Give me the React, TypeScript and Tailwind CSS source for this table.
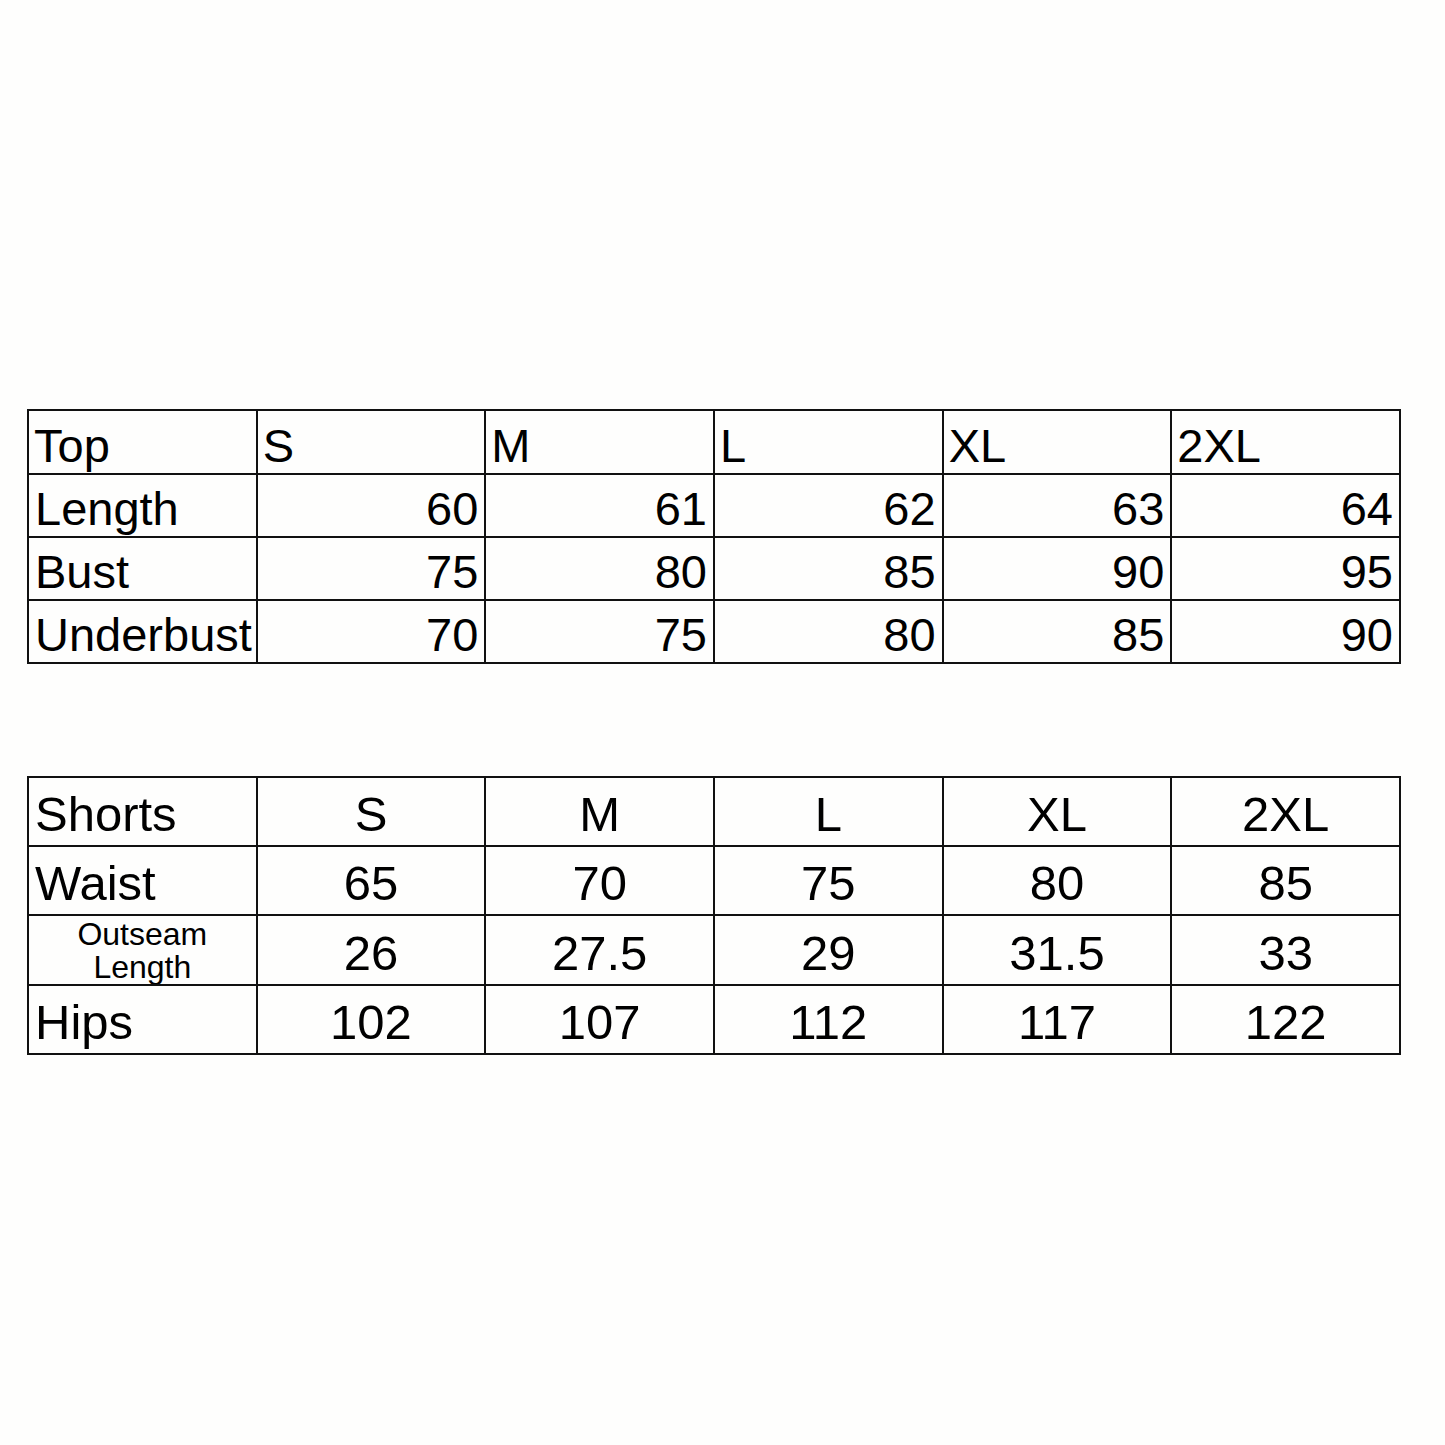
const topRows: [string, number[]][] = [
  ["Length", [60, 61, 62, 63, 64]],
  ["Bust", [75, 80, 85, 90, 95]],
  ["Underbust", [70, 75, 80, 85, 90]],
];

const shortsRows: [string, (number | string)[]][] = [
  ["Waist", [65, 70, 75, 80, 85]],
  ["Outseam Length", [26, "27.5", 29, "31.5", 33]],
  ["Hips", [102, 107, 112, 117, 122]],
];

const sizes = ["S", "M", "L", "XL", "2XL"];

const cell = "border-2 border-[#111] p-0 align-middle overflow-hidden whitespace-nowrap";

export default function App() {
  return (
    <div
      className="min-h-[1445px] w-[1445px] bg-[#fefefd] pl-[27px] pt-[409px] text-black"
      style={{ fontFamily: '"Liberation Sans", Arial, sans-serif' }}
    >
      <table className="w-[1374px] table-fixed border-collapse">
        <tbody>
          <tr className="h-[64px]">
            <td className={`${cell} pl-[5px] pt-[6px] text-[47px] leading-none`}>Top</td>
            {sizes.map((s) => (
              <td key={s} className={`${cell} pl-[5px] pt-[6px] text-[47px] leading-none`}>
                {s}
              </td>
            ))}
          </tr>
          {topRows.map(([label, vals]) => (
            <tr key={label} className="h-[63px]">
              <td className={`${cell} pl-[6px] pt-[6px] text-[47px] leading-none`}>{label}</td>
              {vals.map((v, i) => (
                <td key={i} className={`${cell} pr-[6px] pt-[6px] text-right text-[47px] leading-none`}>
                  {v}
                </td>
              ))}
            </tr>
          ))}
        </tbody>
      </table>

      <table className="mt-[112px] w-[1374px] table-fixed border-collapse">
        <tbody>
          <tr className="h-[69px]">
            <td className={`${cell} pl-[6px] pt-[6px] text-[49px] leading-none`}>Shorts</td>
            {sizes.map((s) => (
              <td key={s} className={`${cell} pt-[6px] text-center text-[49px] leading-none`}>
                {s}
              </td>
            ))}
          </tr>
          {shortsRows.map(([label, vals]) => (
            <tr key={label} className="h-[69px]">
              {label === "Outseam Length" ? (
                <td className={`${cell} pt-[2px] text-center text-[32px] leading-[33px]`}>
                  <div>Outseam</div>
                  <div>Length</div>
                </td>
              ) : (
                <td className={`${cell} pl-[6px] pt-[6px] text-[49px] leading-none`}>{label}</td>
              )}
              {vals.map((v, i) => (
                <td key={i} className={`${cell} pt-[6px] text-center text-[49px] leading-none`}>
                  {v}
                </td>
              ))}
            </tr>
          ))}
        </tbody>
      </table>
    </div>
  );
}
